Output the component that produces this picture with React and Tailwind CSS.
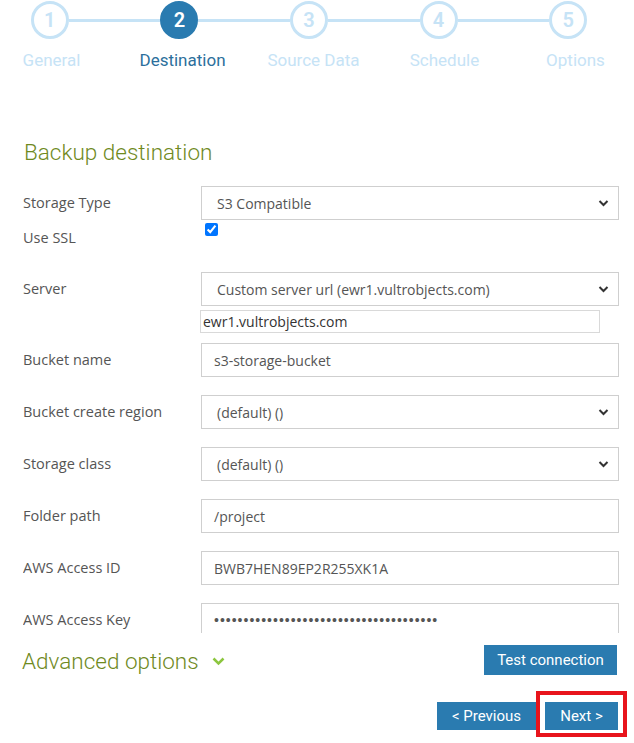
import React from "react";

const steps = [
  { n: 1, label: "General" },
  { n: 2, label: "Destination", active: true },
  { n: 3, label: "Source Data" },
  { n: 4, label: "Schedule" },
  { n: 5, label: "Options" },
];

function Chevron() {
  return (
    <svg width="11" height="8" viewBox="0 0 11 8" className="shrink-0">
      <path d="M1.5 2 L5.5 6 L9.5 2" fill="none" stroke="#333" strokeWidth="2" />
    </svg>
  );
}

function SelectBox({ value }) {
  return (
    <div className="flex h-[34px] items-center justify-between border border-[#cfcfcf] bg-white pl-[15px] pr-[9px] text-[14px] text-[#555]">
      <span>{value}</span>
      <Chevron />
    </div>
  );
}

function TextBox({ value, className = "" }) {
  return (
    <div className={`flex h-[34px] items-center border border-[#cfcfcf] bg-white pl-[12px] text-[14px] text-[#555] ${className}`}>
      {value}
    </div>
  );
}

function Row({ label, children, className = "" }) {
  return (
    <div className={`flex items-center ${className}`}>
      <div className="w-[178px] shrink-0 text-[14.5px] text-[#555]">{label}</div>
      <div className="flex-1">{children}</div>
    </div>
  );
}

export default function App() {
  return (
    <div className="w-[634px] h-[743px] overflow-hidden bg-white font-['Open_Sans',sans-serif]">
      {/* wizard steps */}
      <div className="font-['Roboto',sans-serif]">
        <div className="-ml-[15px] flex w-[648px] pt-[1px]">
          {steps.map((s, i) => (
            <div key={s.n} className="flex flex-1 items-center">
              <div className={`h-[3px] flex-1 ${i === 0 ? "" : "bg-[#c6e3f6]"}`} />
              <div
                className={`flex h-[38px] w-[38px] items-center justify-center rounded-full border-[3px] text-[20px] font-semibold ${
                  s.active
                    ? "border-[#2a7bb0] bg-[#2a7bb0] text-white"
                    : "border-[#c6e3f6] bg-white text-[#c6e3f6]"
                }`}
              >
                {s.n}
              </div>
              <div className={`h-[3px] flex-1 ${i === steps.length - 1 ? "" : "bg-[#c6e3f6]"}`} />
            </div>
          ))}
        </div>
        <div className="-ml-[14px] mt-[11px] grid w-[655px] grid-cols-5">
          {steps.map((s) => (
            <div
              key={s.n}
              className={`text-center text-[17px] leading-[21px] ${
                s.active ? "text-[#2c6f9c]" : "text-[#c6e3f6]"
              }`}
            >
              {s.label}
            </div>
          ))}
        </div>
      </div>

      <div className="pl-[24px] pr-[15px]">
        <h2 className="mt-[67px] h-[28px] font-['Roboto',sans-serif] text-[22.5px] font-light leading-[28px] text-[#6f8a1e]">
          Backup destination
        </h2>

        {/* form, scrolled area */}
        <div className="-ml-[1px] mt-[20px] h-[447px] overflow-hidden">
          <Row label="Storage Type">
            <SelectBox value="S3 Compatible" />
          </Row>
          <div className="flex h-[36px]">
            <div className="w-[178px] shrink-0 self-center text-[14.5px] text-[#555]">Use SSL</div>
            <div className="pl-[4px] pt-[3px]">
              <input type="checkbox" defaultChecked className="m-0 block h-[13px] w-[13px]" />
            </div>
          </div>
          <div className="mt-[16px] flex items-start">
            <div className="flex h-[34px] w-[178px] shrink-0 items-center text-[14.5px] text-[#555]">Server</div>
            <div className="flex-1">
              <SelectBox value="Custom server url (ewr1.vultrobjects.com)" />
              <div className="-ml-[1px] mt-[4px] flex h-[23px] w-[400px] items-center border border-[#d9d9d9] pl-[2px] text-[14px] text-[#333]">
                ewr1.vultrobjects.com
              </div>
            </div>
          </div>
          <Row label="Bucket name" className="mt-[10px]">
            <TextBox value="s3-storage-bucket" />
          </Row>
          <Row label="Bucket create region" className="mt-[18px]">
            <SelectBox value="(default) ()" />
          </Row>
          <Row label="Storage class" className="mt-[18px]">
            <SelectBox value="(default) ()" />
          </Row>
          <Row label="Folder path" className="mt-[18px]">
            <TextBox value="/project" />
          </Row>
          <Row label="AWS Access ID" className="mt-[18px]">
            <TextBox value="BWB7HEN89EP2R255XK1A" />
          </Row>
          <Row label="AWS Access Key" className="mt-[18px]">
            <TextBox
              value={<span className="font-['Liberation_Sans',sans-serif] tracking-[1px]">{"•".repeat(38)}</span>}
            />
          </Row>
        </div>
      </div>

      {/* advanced + test */}
      <div className="mt-[12px] flex h-[30px] items-center justify-between pl-[22px] pr-[17px]">
        <div className="mt-[3px] flex items-center gap-[13px] font-['Roboto',sans-serif] text-[22.5px] font-light text-[#6f8a1e]">
          <span>Advanced options</span>
          <svg width="13" height="9" viewBox="0 0 13 9">
            <path d="M1.5 1.5 L6.5 6.5 L11.5 1.5" fill="none" stroke="#8cc63f" strokeWidth="2.5" />
          </svg>
        </div>
        <button className="h-[30px] w-[133px] bg-[#2a7bb0] font-['Roboto',sans-serif] text-[15px] text-white">
          Test connection
        </button>
      </div>

      {/* footer nav */}
      <div className="mt-[27px] flex justify-end gap-[9px] pr-[16px] font-['Roboto',sans-serif] text-[15px] text-white">
        <button className="h-[28px] w-[99px] bg-[#2a7bb0]">&lt; Previous</button>
        <span className="relative">
          <button className="h-[28px] w-[73px] bg-[#2a7bb0]">Next &gt;</button>
          <span className="pointer-events-none absolute -bottom-[7px] -left-[9px] -right-[9px] -top-[11px] border-4 border-[#e8141c]" />
        </span>
      </div>
    </div>
  );
}
